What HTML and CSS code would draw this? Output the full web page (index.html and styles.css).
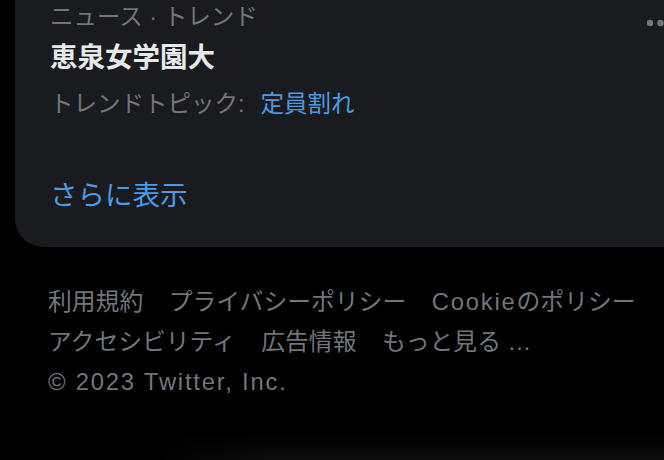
FILE: index.html
```html
<!DOCTYPE html>
<html lang="ja">
<head>
  <meta charset="UTF-8" />
  <meta name="viewport" content="width=device-width, initial-scale=1.0"/>
  <title>トレンド</title>
  <link rel="stylesheet" href="styles.css">
</head>
<body>
  <div class="trend-card">
    <div class="trend">
      <div class="trend-head">
        <span class="trend-meta">ニュース · トレンド</span>
        <svg class="more-icon" viewBox="0 0 32 8" width="32" height="8">
          <circle cx="4" cy="4" r="3.2"></circle>
          <circle cx="14.5" cy="4" r="3.2"></circle>
          <circle cx="25" cy="4" r="3.2"></circle>
        </svg>
      </div>
      <div class="trend-name">恵泉女学園大</div>
      <div class="trend-topic">トレンドトピック:<a href="#">定員割れ</a></div>
    </div>
    <a class="show-more" href="#">さらに表示</a>
  </div>

  <nav class="footer">
    <div class="footer-row">
      <a href="#">利用規約</a>
      <a href="#">プライバシーポリシー</a>
      <a href="#"><span class="latin">Cookie</span>のポリシー</a>
    </div>
    <div class="footer-row">
      <a href="#">アクセシビリティ</a>
      <a href="#">広告情報</a>
      <a href="#">もっと見る …</a>
    </div>
    <div class="footer-row">
      <span class="latin">© 2023 Twitter, Inc.</span>
    </div>
  </nav>

  <div class="bottom-glow"></div>
</body>
</html>
```

FILE: styles.css
```css
html, body {
  height: 100%;
}
body {
  margin: 0;
  background-color: #000;
  font-family: "Liberation Sans", "Noto Sans CJK JP", sans-serif;
  color: #71767b;
  overflow: hidden;
  position: relative;
}
a {
  text-decoration: none;
  color: inherit;
}
.trend-card {
  background-color: #1a1b1f;
  margin-left: 15px;
  width: 700px;
  border-radius: 0 0 28px 28px;
  padding: 3px 0 0 35px;
  box-sizing: border-box;
  height: 247px;
}
.trend-head {
  display: flex;
  align-items: center;
  width: 628px;
  justify-content: space-between;
}
.trend-meta {
  font-size: 23.5px;
  line-height: 29px;
}
.more-icon {
  fill: #71767b;
  margin-top: 10px;
}
.trend-name {
  font-size: 27.5px;
  font-weight: bold;
  color: #e7e9ea;
  line-height: 36px;
  margin-top: 8px;
}
.trend-topic {
  font-size: 23.5px;
  line-height: 29px;
  margin-top: 14px;
}
.trend-topic a {
  margin-left: 16px;
}
.trend-topic a,
.show-more {
  color: #4a9be6;
}
.show-more {
  display: block;
  font-size: 27.5px;
  line-height: 36px;
  margin-top: 59px;
}
.footer {
  padding: 35px 0 0 48px;
}
.footer-row {
  display: flex;
  gap: 25.5px;
  font-size: 23.8px;
  line-height: 40px;
}
.latin {
  letter-spacing: 1.8px;
}
.bottom-glow {
  position: absolute;
  left: 150px;
  right: 0;
  bottom: 0;
  height: 28px;
  background: linear-gradient(to bottom, rgba(255,255,255,0), rgba(255,255,255,0.05));
  -webkit-mask-image: linear-gradient(to right, transparent, #000 120px);
}
```
